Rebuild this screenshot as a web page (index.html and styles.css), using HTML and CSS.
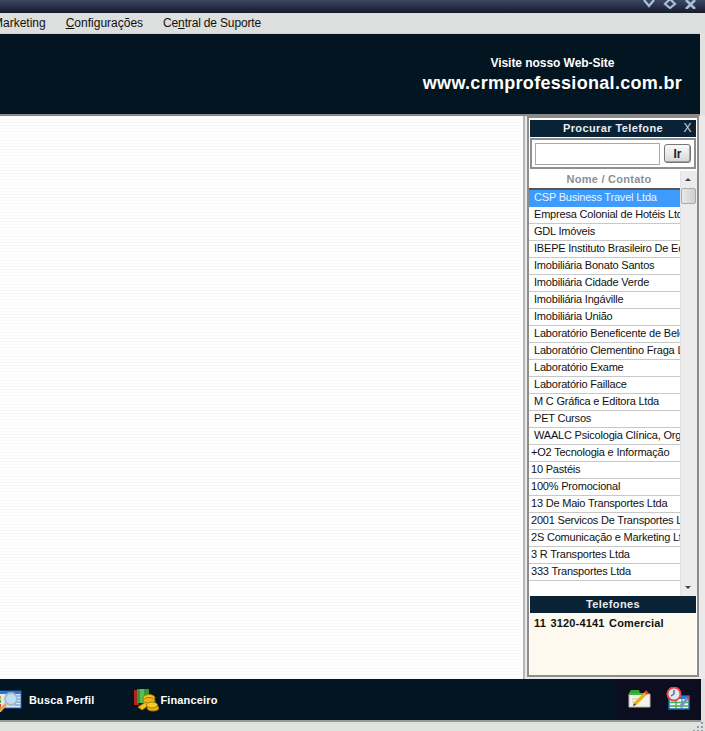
FILE: index.html
```html
<!DOCTYPE html>
<html lang="pt-BR">
<head>
<meta charset="utf-8">
<title>CRM Professional</title>
<link rel="stylesheet" href="styles.css">
</head>
<body>
<div class="app">
  <div class="titlebar">
    <svg class="winctl" width="60" height="9" viewBox="0 0 60 9">
      <path d="M4 0 9 6 14 0" fill="none" stroke="#a8bedb" stroke-width="2.4"/>
      <path d="M30 -1 25 4 30 8 35 4Z" fill="none" stroke="#a8bedb" stroke-width="2.2"/>
      <path d="M46 0 55 9M55 0 46 9" fill="none" stroke="#a8bedb" stroke-width="2.6"/>
    </svg>
  </div>
  <nav class="menu">
    <span class="menu-item first">Marketing</span>
    <span class="menu-item"><u>C</u>onfigurações</span>
    <span class="menu-item tight">Ce<u>n</u>tral de Suporte</span>
  </nav>
  <header class="banner">
    <div class="site">
      <div class="site-label">Visite nosso Web-Site</div>
      <div class="site-url">www.crmprofessional.com.br</div>
    </div>
  </header>
  <div class="content">
    <main class="canvas"></main>
    <aside class="panel">
      <div class="panel-inner">
        <div class="panel-title"><span>Procurar Telefone</span><span class="close">X</span></div>
        <div class="search">
          <input class="search-input" type="text" aria-label="Procurar">
          <button class="search-btn">Ir</button>
        </div>
        <div class="list-wrap">
          <div class="list">
            <div class="list-head">Nome / Contato</div>
            <div class="row pad selected">CSP Business Travel Ltda</div>
            <div class="row pad">Empresa Colonial de Hotéis Ltda</div>
            <div class="row pad">GDL Imóveis</div>
            <div class="row pad">IBEPE Instituto Brasileiro De Educação</div>
            <div class="row pad">Imobiliária Bonato Santos</div>
            <div class="row pad">Imobiliária Cidade Verde</div>
            <div class="row pad">Imobiliária Ingáville</div>
            <div class="row pad">Imobiliária União</div>
            <div class="row pad">Laboratório Beneficente de Belém</div>
            <div class="row pad">Laboratório Clementino Fraga Ltda</div>
            <div class="row pad">Laboratório Exame</div>
            <div class="row pad">Laboratório Faillace</div>
            <div class="row pad">M C Gráfica e Editora Ltda</div>
            <div class="row pad">PET Cursos</div>
            <div class="row pad">WAALC Psicologia Clínica, Organizacional</div>
            <div class="row">+O2 Tecnologia e Informação</div>
            <div class="row">10 Pastéis</div>
            <div class="row">100% Promocional</div>
            <div class="row">13 De Maio Transportes Ltda</div>
            <div class="row">2001 Servicos De Transportes Ltda</div>
            <div class="row">2S Comunicação e Marketing Ltda</div>
            <div class="row">3 R Transportes Ltda</div>
            <div class="row">333 Transportes Ltda</div>
          </div>
          <div class="scrollbar">
            <svg class="arrow" width="15" height="17" viewBox="0 0 15 17"><path d="M4 10H10L7 7Z" fill="#444"/></svg>
            <div class="thumb"></div>
            <svg class="arrow bottom" width="15" height="17" viewBox="0 0 15 17"><path d="M4 7H10L7 10Z" fill="#444"/></svg>
          </div>
        </div>
        <div class="phones-title">Telefones</div>
        <div class="phones"><b>11</b>&nbsp; 3120-4141 &nbsp;Comercial</div>
      </div>
    </aside>
  </div>
  <footer class="toolbar">
    <div class="tools">
      <div class="tool busca">
        <svg width="25" height="24" viewBox="0 0 25 24">
          <rect x="0" y="3" width="24" height="17" fill="#dbe9f8" stroke="#1f5fae"/>
          <rect x="0" y="3" width="24" height="3" fill="#2f78cf"/>
          <path d="M17 8H23M17 11H23M17 14H23M17 17H23" stroke="#3f86d6"/>
          <rect x="1" y="8" width="3" height="3" fill="#d8a13a"/>
          <rect x="1" y="12" width="3" height="3" fill="#4aa34a"/>
          <rect x="1" y="16" width="3" height="3" fill="#cc4a3a"/>
          <circle cx="14" cy="11" r="6" fill="#c4dcf2" stroke="#a4b8cc" stroke-width="1.8"/>
          <path d="M9 16 2 24" stroke="#eba24a" stroke-width="3"/>
        </svg>
        <span>Busca Perfil</span>
      </div>
      <div class="tool fin">
        <svg width="25" height="24" viewBox="0 0 25 24">
          <rect x="0" y="2" width="5" height="15" fill="#b3241c"/>
          <rect x="3" y="1" width="12" height="14" fill="#2f9a35"/>
          <rect x="6" y="1" width="4" height="14" fill="#57bf54"/>
          <ellipse cx="15" cy="10" rx="6" ry="3.5" fill="#f2c21f" stroke="#a87808"/>
          <ellipse cx="15" cy="13" rx="6" ry="3.5" fill="#eab515" stroke="#a87808"/>
          <path d="M4 19 12 14 15 17 8 22Z" fill="#f2c21f" stroke="#a87808"/>
          <ellipse cx="19" cy="20" rx="6" ry="3" fill="#eab515" stroke="#a87808"/>
          <ellipse cx="18" cy="17" rx="5.500" ry="3" fill="#f5cc2c" stroke="#a87808"/>
        </svg>
        <span>Financeiro</span>
      </div>
    </div>
    <div class="shortcuts">
      <svg width="24" height="20" viewBox="0 0 24 20">
        <path d="M1 5H22V18H1Z" fill="#f3f3ee" stroke="#b9b9ae"/>
        <path d="M1 4 3 1H11L12 4Z" fill="#2fa52f"/>
        <path d="M1 4H16V6H1Z" fill="#3fb83c"/>
        <path d="M4 10H12M4 13H10" stroke="#c8c8bd"/>
        <path d="M7 15 19 3" stroke="#e8b020" stroke-width="3.400"/>
        <path d="M17.500 4.500 19.500 2.500" stroke="#d83a3a" stroke-width="3.400"/>
        <path d="M5 17 6 14 8 16Z" fill="#333"/>
      </svg>
      <svg width="25" height="24" viewBox="0 0 25 24">
        <rect x="3" y="9" width="20" height="13" fill="#f4f8fb" stroke="#1d5fbf" stroke-width="1.500"/>
        <rect x="3" y="9" width="20" height="3" fill="#2a78d8"/>
        <path d="M3 15.500H23M3 19H23M10 12V22M16 12V22" stroke="#35b04a" stroke-width="1.300"/>
        <path d="M14 20 22 11" stroke="#8a8ac0" stroke-width="3"/>
        <path d="M21.500 11.500 23 10" stroke="#d04040" stroke-width="3"/>
        <circle cx="8" cy="7" r="6.500" fill="#dfe8f0" stroke="#e8474a" stroke-width="2"/>
        <path d="M8 7 5 9M8 7V3" stroke="#4a6a8a" stroke-width="1.400"/>
      </svg>
    </div>
  </footer>
  <div class="status">
    <svg class="grip" width="12" height="9" viewBox="0 0 12 9">
      <path d="M8 0H10V2H8ZM4 4H6V6H4ZM8 4H10V6H8ZM0 8H2V9H0ZM4 8H6V9H4ZM8 8H10V9H8Z" fill="#8f9aa3"/>
    </svg>
  </div>
</div>
</body>
</html>
```
FILE: styles.css
```css
* { box-sizing: border-box; }
html, body { margin: 0; padding: 0; }
body { background: #e0e2e0; font-family: "Liberation Sans", Arial, sans-serif; overflow: hidden; }

.app { width: 705px; height: 731px; display: flex; flex-direction: column; overflow: hidden; }

.titlebar {
  height: 13px; flex: none; display: flex; justify-content: flex-end;
  background: linear-gradient(#3b4763, #171c2e);
}
.winctl { margin-right: 5px; }

.menu {
  height: 20px; flex: none; display: flex; align-items: center; gap: 20px;
  background: #dddfde; font-size: 12px; color: #111;
  padding-right: 4px; overflow: hidden;
}
.menu-item.first { margin-left: -7px; }
.menu-item.tight { letter-spacing: -.16px; }

.banner {
  height: 83px; flex: none; margin-right: 5px;
  background: #021520;
  border-top: 1px solid #cfd0cf; border-bottom: 2px solid #8a8a8a;
  display: flex; justify-content: flex-end; align-items: flex-start;
  padding: 21px 18px 0 0;
  color: #fff; font-weight: bold;
}
.site { display: flex; flex-direction: column; align-items: center; gap: 2px; }
.site-label { font-size: 12px; line-height: 16px; letter-spacing: -.05px; }
.site-url { font-size: 18px; line-height: 21px; letter-spacing: .3px; }

.content { height: 563px; flex: none; display: flex; background: #e9eae9; }

.canvas {
  width: 525px; flex: none;
  background: repeating-linear-gradient(#f8f8f8 0 1px, #ffffff 1px 3px);
  border-right: 2px solid #b5b5b5;
}

.panel { flex: 1; padding: 0 4px 0 2px; min-width: 0; }
.panel-inner {
  width: 172px; height: 561px;
  border: 2px solid #8c8c8c;
  background: #fff; padding: 2px 0 0 0;
  display: flex; flex-direction: column;
}

.panel-title {
  height: 17px; flex: none; margin: 0 1px;
  background: #0a2236; color: #e8edf2;
  font-size: 11px; font-weight: bold; letter-spacing: .4px; line-height: 17px;
  text-align: center; position: relative;
}
.close { position: absolute; right: 4px; top: 0; font-weight: normal; font-size: 12px; color: #c9d4df; }

.search {
  height: 31px; flex: none; margin: 1px 1px 2px 1px;
  border: 2px solid #8f8f8f;
  background: #fff; display: flex; align-items: center; gap: 4px; padding: 0 2px 0 3px;
}
.search-input { width: 125px; height: 22px; border: 1px solid #a9a9a9; background: #fff; padding: 0; margin: 0; outline: none; }
.search-btn {
  width: 27px; height: 19px; padding: 0; margin: 0;
  border: 1px solid #777; border-radius: 3px;
  background: linear-gradient(#fafafa, #d8d8d8);
  box-shadow: inset -1px -1px 0 #a0a0a0;
  font: bold 12px "Liberation Sans", Arial, sans-serif; color: #222;
}

.list-wrap { height: 425px; flex: none; display: flex; }
.list {
  width: 151px; flex: none; overflow: hidden; white-space: nowrap;
  font-size: 11px; letter-spacing: -.2px; color: #111;
}
.list-head {
  height: 19px; line-height: 17px; text-align: center; padding-left: 9px;
  font-size: 11px; font-weight: bold; letter-spacing: .25px; color: #8a8f98;
  border-bottom: 2px solid #555;
  background: #fff;
}
.row { height: 17px; line-height: 15px; padding-left: 2px; border-bottom: 1px solid #c8c8c8; overflow: hidden; }
.row.pad { padding-left: 5px; }
.row.selected { background: #3c9bfc; color: #eaf4ff; border-bottom-color: #3c9bfc; }

.scrollbar { width: 17px; flex: none; background: #ececec; position: relative; border-left: 1px solid #e2e2e2; }
.arrow { display: block; }
.arrow.bottom { position: absolute; bottom: 0; left: 0; }
.thumb { width: 15px; height: 16px; background: linear-gradient(90deg, #e8e8e8, #cfcfcf); border: 1px solid #aaa; border-radius: 2px; }

.phones-title {
  height: 17px; flex: none; margin: 0 1px;
  background: #0a2236; color: #e8edf2;
  font-size: 11px; font-weight: bold; letter-spacing: .4px; line-height: 17px; text-align: center;
}
.phones {
  flex: 1; background: #fef9ee; margin: 0 1px; padding: 3px 4px;
  font-size: 11px; font-weight: bold; color: #111; letter-spacing: .15px; word-spacing: -.9px; line-height: 14px; white-space: pre;
}

.toolbar {
  height: 43px; flex: none; display: flex; justify-content: space-between; margin-right: 4px;
  background: #021520; border-bottom: 2px solid #999;
}
.tools { display: flex; align-items: center; margin-left: -3px; color: #fff; font-size: 11px; font-weight: bold; letter-spacing: .15px; }
.tool { display: flex; align-items: center; }
.tool.busca { gap: 7px; }
.tool.fin { gap: 1px; margin-left: 40px; }
.shortcuts { width: 86px; background: #0d0d20; display: flex; align-items: center; gap: 14px; padding: 0 0 2px 13px; }

.status { flex: 1; background: #e0e2e0; display: flex; justify-content: flex-end; align-items: flex-end; }
.grip { display: block; }
```
